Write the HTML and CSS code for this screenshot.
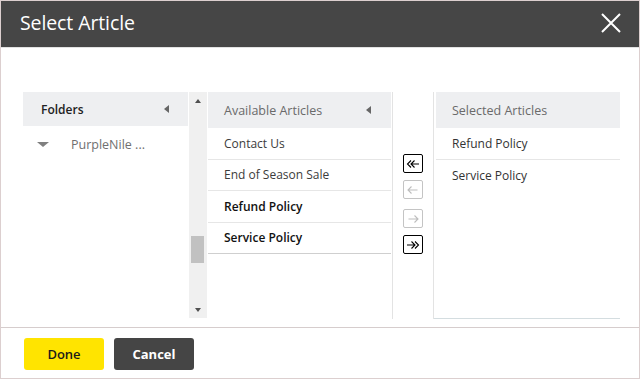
FILE: index.html
```html
<!DOCTYPE html>
<html lang="en">
<head>
<meta charset="utf-8">
<title>Select Article</title>
<link rel="stylesheet" href="styles.css">
</head>
<body>
<div class="dialog">
  <header class="dlg-head">
    <h1 class="dlg-title">Select Article</h1>
    <button class="close" aria-label="Close">
      <svg width="20" height="20" viewBox="0 0 20 20"><path d="M1 1L19 19M19 1L1 19" stroke="#fff" stroke-width="2" fill="none"/></svg>
    </button>
  </header>
  <main class="dlg-body">
    <div class="panes">
      <section class="pane folders">
        <div class="pane-head folders-head"><span class="head-text">Folders</span><span class="tri-left"></span></div>
        <div class="tree-item"><span class="tri-down"></span><span>PurpleNile ...</span></div>
      </section>
      <div class="scrollbar">
        <span class="arr-up"></span>
        <span class="thumb"></span>
        <span class="arr-down"></span>
      </div>
      <section class="pane available">
        <div class="pane-head"><span class="head-text muted">Available Articles</span><span class="tri-left"></span></div>
        <ul class="list avail-list">
          <li class="row">Contact Us</li>
          <li class="row">End of Season Sale</li>
          <li class="row picked">Refund Policy</li>
          <li class="row picked">Service Policy</li>
        </ul>
      </section>
      <div class="movers">
        <button class="mv active" aria-label="Remove all">
          <svg width="14" height="10" viewBox="0 0 14 10"><path d="M5 1.5L1.5 5L5 8.5M8.5 1.5L5 5L8.5 8.5M5 5H13" stroke="#000" stroke-width="1.1" fill="none"/></svg>
        </button>
        <button class="mv" aria-label="Remove">
          <svg width="14" height="10" viewBox="0 0 14 10"><path d="M5.5 1.5L2 5L5.5 8.5M2 5H11.5" stroke="#bdbdbd" stroke-width="1.1" fill="none"/></svg>
        </button>
        <button class="mv sep" aria-label="Add">
          <svg width="14" height="10" viewBox="0 0 14 10"><path d="M8.5 1.5L12 5L8.5 8.5M2.5 5H12" stroke="#bdbdbd" stroke-width="1.1" fill="none"/></svg>
        </button>
        <button class="mv active" aria-label="Add all">
          <svg width="14" height="10" viewBox="0 0 14 10"><path d="M5.5 1.5L9 5L5.5 8.5M9 1.5L12.5 5L9 8.5M1 5H9" stroke="#000" stroke-width="1.1" fill="none"/></svg>
        </button>
      </div>
      <section class="pane selected">
        <div class="pane-head"><span class="head-text muted">Selected Articles</span></div>
        <ul class="list sel-list">
          <li class="row">Refund Policy</li>
          <li class="row">Service Policy</li>
        </ul>
      </section>
    </div>
  </main>
  <footer class="dlg-foot">
    <button class="btn done">Done</button>
    <button class="btn cancel">Cancel</button>
  </footer>
</div>
</body>
</html>
```

FILE: styles.css
```css
* { box-sizing: border-box; }
body { margin: 0; font-family: "Open Sans", "Liberation Sans", sans-serif; background: #fff; }

.dialog {
  width: 640px;
  height: 379px;
  border: 1px solid #dccfcf;
  display: flex;
  flex-direction: column;
  background: #fff;
}

.dlg-head {
  height: 47px;
  flex: none;
  background: #464646;
  border-bottom: 1px solid #e2e2e2;
  display: flex;
  justify-content: space-between;
  align-items: flex-start;
  padding: 0 18px 0 19px;
}
.dlg-title {
  margin: 0;
  font-size: 19.5px;
  font-weight: 400;
  line-height: 44px;
  color: #fff;
  letter-spacing: -0.1px;
}
.close {
  margin-top: 12px;
  width: 20px;
  height: 20px;
  padding: 0;
  border: 0;
  background: none;
  display: block;
}
.close svg { display: block; }

.dlg-body {
  flex: 1;
  padding: 44px 0 0 22px;
}
.panes {
  display: flex;
  height: 227px;
}
.pane { display: flex; flex-direction: column; }

.folders { width: 165px; }
.scrollbar {
  width: 18px;
  margin-left: 1px;
  height: 226px;
  background: #f0f0f0;
  display: flex;
  flex-direction: column;
  align-items: center;
}
.arr-up {
  margin-top: 7px;
  width: 0; height: 0;
  border-left: 3.5px solid transparent;
  border-right: 3.5px solid transparent;
  border-bottom: 4px solid #505050;
}
.thumb {
  margin-top: 133px;
  width: 13px;
  height: 27px;
  background: #c1c1c1;
  margin-right: 1px;
}
.arr-down {
  margin-top: auto;
  margin-bottom: 6px;
  width: 0; height: 0;
  border-left: 3.5px solid transparent;
  border-right: 3.5px solid transparent;
  border-top: 4px solid #505050;
}

.available { width: 183px; margin-left: 1px; }
.selected {
  width: 186px;
  margin-left: 0;
  border-bottom: 1px solid #d4dde0;
  padding-left: 2px;
}

.pane-head {
  height: 36px;
  flex: none;
  background: #eeeff1;
  display: flex;
  align-items: center;
  justify-content: space-between;
  padding: 0 20px 0 16px;
}
.folders-head {
  height: 34px;
  padding: 0 19px 0 18px;
}
.head-text {
  font-size: 12px;
  font-weight: 600;
  color: #222;
}
.head-text.muted {
  font-size: 12.5px;
  font-weight: 400;
  color: #6a6a6a;
}
.tri-left {
  width: 0; height: 0;
  border-top: 4.5px solid transparent;
  border-bottom: 4.5px solid transparent;
  border-right: 5px solid #666;
}

.tree-item {
  height: 36px;
  display: flex;
  align-items: center;
  padding-left: 14px;
  font-size: 12.5px;
  color: #707070;
}
.tri-down {
  width: 0; height: 0;
  border-left: 6px solid transparent;
  border-right: 6px solid transparent;
  border-top: 5px solid #808080;
  margin-right: 22px;
}

.list { list-style: none; margin: 0; padding: 0; }
.row {
  height: 31.5px;
  display: flex;
  align-items: center;
  padding-left: 16px;
  font-size: 12px;
  color: #3c3c3c;
  border-bottom: 1px solid #e6e6e6;
}
.row.picked { color: #111; font-weight: 600; }
.avail-list .row:last-child { border-bottom-color: #cfcfcf; }
.sel-list .row { padding-left: 16px; color: #333; }
.sel-list .row:last-child { border-bottom: 0; }

.movers {
  width: 42px;
  margin-left: 1px;
  border-left: 1px solid #e3e3e3;
  border-right: 1px solid #e3e3e3;
  padding: 62px 0 0 10px;
  display: flex;
  flex-direction: column;
}
.mv {
  width: 20px;
  height: 19px;
  padding: 0;
  background: #fff;
  border: 1px solid #c4c4c4;
  border-radius: 2px;
  display: flex;
  align-items: center;
  justify-content: center;
}
.mv + .mv { margin-top: 7px; }
.mv.sep { margin-top: 10px; }
.mv.active { border-color: #000; }
.mv svg { display: block; }

.dlg-foot {
  height: 51px;
  flex: none;
  border-top: 1px solid #d6cdcd;
  padding: 10px 0 0 23px;
  display: flex;
  align-items: flex-start;
  gap: 10px;
}
.btn {
  width: 80px;
  height: 32px;
  border: 0;
  border-radius: 3px;
  font-family: "Open Sans", "Liberation Sans", sans-serif;
  font-size: 13px;
  padding: 0;
}
.done { background: #ffe400; color: #1a1a1a; font-weight: 600; }
.cancel { background: #454545; color: #fff; font-weight: 700; }
```
